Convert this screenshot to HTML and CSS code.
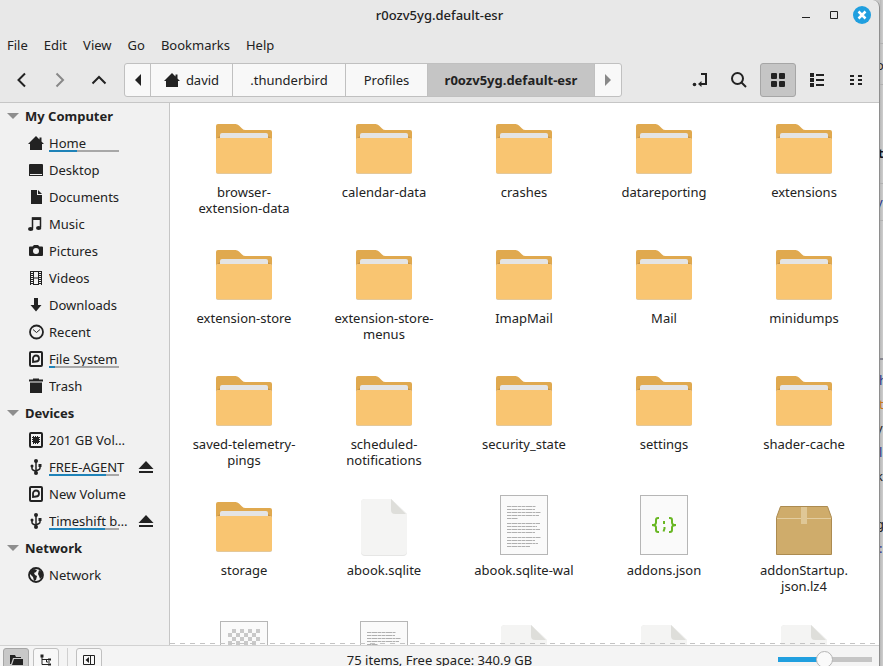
FILE: index.html
```
<!DOCTYPE html>
<html lang="en">
<head>
<meta charset="utf-8">
<title>r0ozv5yg.default-esr</title>
<link rel="stylesheet" href="styles.css">
</head>
<body>
<svg class="defs" aria-hidden="true">
  <defs>
    <symbol id="folder" viewBox="0 0 64 64">
      <path d="M4 10q0-2 2-2h17.500q2 0 3.500 1.500l3 3q1.500 1.500 3.500 1.500H58q2 0 2 2v8H4z" fill="#e0a94f"/>
      <path d="M4 23l4-3h48l4 3v3H4z" fill="#c4924a"/>
      <path d="M8 24v-5q0-2 2-2h44q2 0 2 2v5z" fill="#e4e4e4"/>
      <path d="M4 24q0-2 2-2h52q2 0 2 2v32q0 2-2 2H6q-2 0-2-2z" fill="#cfcac2"/>
      <path d="M4 24q0-2 2-2h52q2 0 2 2v31.500q0 2-2 2H6q-2 0-2-2z" fill="#f9c571"/>
    </symbol>
    <symbol id="blank" viewBox="0 0 64 64">
      <path d="M9 9q0-4 4-4h26l16 15v38q0 4-4 4H13q-4 0-4-4z" fill="#e6e6e5"/>
      <path d="M9 9q0-4 4-4h26l16 15v37q0 4-4 4H13q-4 0-4-4z" fill="#f4f4f3"/>
      <path d="M39 5l15 15H43q-4 0-4-4z" fill="#dededa"/>
    </symbol>
    <symbol id="sheet" viewBox="0 0 64 64">
      <rect x="8.500" y="1.500" width="47" height="59" fill="#fafafa" stroke="#b6b6b6"/>
    </symbol>
    <symbol id="text-file" viewBox="0 0 64 64">
      <use href="#sheet"/>
      <path d="M15 12.500h29M15 15.500h28M15 18.500h34M15 21.500h32M15 24.500h11M15 29.500h33M15 32.500h30M15 35.500h33M15 38.500h28M15 43.500h34M15 46.500h28M15 49.500h31M15 52.500h23" stroke="#b0b0b0" stroke-dasharray="4 .5 6 .5 3 .5"/>
    </symbol>
    <symbol id="image-file" viewBox="0 0 64 64">
      <use href="#sheet"/>
      <path d="M20 11h32M20 19h32M20 27h32" stroke="#c9c9c9" stroke-width="4" stroke-dasharray="4 4"/>
      <path d="M16 15h32M16 23h32M16 31h32" stroke="#c9c9c9" stroke-width="4" stroke-dasharray="4 4"/>
    </symbol>
    <symbol id="json-file" viewBox="0 0 64 64">
      <use href="#sheet"/>
      <g fill="none" stroke="#68b723" stroke-width="2">
        <path d="M27 24h-1q-2 0-2 2v2.500q0 2.500-4 2.500 4 0 4 2.500V36q0 2 2 2h1M37 24h1q2 0 2 2v2.500q0 2.500 4 2.500-4 0-4 2.500V36q0 2-2 2h-1"/>
        <path d="M32 27v3M32.500 33v1.500l-1 3"/>
      </g>
    </symbol>
    <symbol id="archive" viewBox="0 0 64 64">
      <path d="M8.500 12.500h47l4 11v37h-55v-37z" fill="#cfac6b" stroke="#ac8b50"/>
      <path d="M5 24.500h54" stroke="#e3cda0"/>
      <path d="M29 13h6v17h-6z" fill="#dfc796"/>
    </symbol>
    <symbol id="home" viewBox="0 0 16 16"><path d="M8 1L0 9h2v6h12V9h2l-2.500-2.500V2.500h-2v2z" fill="currentColor"/></symbol>
    <symbol id="disk" viewBox="0 0 16 16"><rect x="2" y="1" width="12" height="14" rx="1" fill="none" stroke="currentColor" stroke-width="2"/><path d="M5 11V7.500A3 3 0 1 1 8 10.500z" fill="none" stroke="currentColor" stroke-width="1.800"/></symbol>
    <symbol id="usb" viewBox="0 0 16 16"><path d="M8 2v12M4 6.500v3q0 1 1 1.500l3 1.500M12 6v3q0 1-1 1.500L8 12" fill="none" stroke="currentColor" stroke-width="1.500"/><circle cx="8" cy="2" r="2" fill="currentColor"/><circle cx="8" cy="14" r="2" fill="currentColor"/><circle cx="4" cy="7" r="1.500" fill="currentColor"/><path d="M10.500 5h3v3h-3z" fill="currentColor"/></symbol>
    <symbol id="eject" viewBox="0 0 16 16"><path d="M8 2l7.500 8h-15zM1 12h14v2H1z" fill="currentColor"/></symbol>
  </defs>
</svg>
<div class="desktop">
<div class="window">
  <header class="titlebar">
    <h1>r0ozv5yg.default-esr</h1>
    <div class="controls">
      <button aria-label="Minimize"><svg viewBox="0 0 16 16"><path d="M4 10.500h8" stroke="#222"/></svg></button>
      <button aria-label="Maximize"><svg viewBox="0 0 16 16"><path d="M4.500 4.500h7v7h-7z" fill="none" stroke="#222"/></svg></button>
      <button class="close" aria-label="Close"><svg viewBox="0 0 16 16"><path d="M4.500 4.500l7 7m0-7l-7 7" stroke="#fff" stroke-width="2.500"/></svg></button>
    </div>
  </header>
  <nav class="menubar">
    <button>File</button><button>Edit</button><button>View</button><button>Go</button><button>Bookmarks</button><button>Help</button>
  </nav>
  <div class="toolbar">
    <div class="tools">
      <button aria-label="Back"><svg viewBox="0 0 16 16"><path d="M12 1.500L5.500 8l6.500 6.500" fill="none" stroke="currentColor" stroke-width="2"/></svg></button>
      <button class="dim" aria-label="Forward"><svg viewBox="0 0 16 16"><path d="M4.500 1.500L11 8l-6.500 6.500" fill="none" stroke="currentColor" stroke-width="2"/></svg></button>
      <button aria-label="Up"><svg viewBox="0 0 16 16"><path d="M1.500 11.500L8 5l6.500 6.500" fill="none" stroke="currentColor" stroke-width="2"/></svg></button>
    </div>
    <nav class="path">
      <button class="step" aria-label="Scroll left"><svg viewBox="0 0 16 16"><path d="M11 2v12L5 8z" fill="currentColor"/></svg></button>
      <button class="short"><svg viewBox="0 0 16 16"><use href="#home"/></svg>david</button>
      <button class="medium">.thunderbird</button>
      <button class="short">Profiles</button>
      <button class="current">r0ozv5yg.default-esr</button>
      <button class="step dim" aria-label="Scroll right"><svg viewBox="0 0 16 16"><path d="M5 2v12l6-6z" fill="currentColor"/></svg></button>
    </nav>
    <div class="tools views">
      <button aria-label="Toggle location entry"><svg viewBox="0 0 16 16"><path d="M9 2h5v10H8" fill="none" stroke="currentColor" stroke-width="2"/><path d="M9.500 9v6L6 12z" fill="currentColor"/><circle cx="2.500" cy="12.500" r="1.800" fill="currentColor"/></svg></button>
      <button aria-label="Search"><svg viewBox="0 0 16 16"><circle cx="6.500" cy="6.500" r="5.500" fill="none" stroke="currentColor" stroke-width="2"/><path d="M10.500 10.500l4.500 4.500" stroke="currentColor" stroke-width="2"/></svg></button>
      <button class="active" aria-label="Icon view"><svg viewBox="0 0 16 16"><path d="M2 1h4q1 0 1 1v4q0 1-1 1H2Q1 7 1 6V2q0-1 1-1zM10 1h4q1 0 1 1v4q0 1-1 1h-4q-1 0-1-1V2q0-1 1-1zM2 9h4q1 0 1 1v4q0 1-1 1H2q-1 0-1-1v-4q0-1 1-1zM10 9h4q1 0 1 1v4q0 1-1 1h-4q-1 0-1-1v-4q0-1 1-1z" fill="currentColor"/></svg></button>
      <button aria-label="List view"><svg viewBox="0 0 16 16"><path d="M1 1h4v4H1zM1 6h4v4H1zM1 11h4v4H1zM7 2h8v2H7zM7 7h8v2H7zM7 12h8v2H7z" fill="currentColor"/></svg></button>
      <button aria-label="Compact view"><svg viewBox="0 0 16 16"><path d="M2 3h4v2H2zM2 7h4v2H2zM2 11h4v2H2zM10 3h4v2h-4zM10 7h4v2h-4zM10 11h4v2h-4z" fill="currentColor"/></svg></button>
    </div>
  </div>
  <div class="content">
    <aside class="sidebar">
      <h2>My Computer</h2>
      <ul>
        <li><svg viewBox="0 0 16 16"><use href="#home"/></svg><a href="#">Home</a><i class="usage"><b style="width:40%"></b></i></li>
        <li><svg viewBox="0 0 16 16"><path d="M1 3q0-1 1-1h12q1 0 1 1v11H1z" fill="currentColor"/><path d="M2 12.500h12" stroke="#f1f1f1"/></svg><a href="#">Desktop</a></li>
        <li><svg viewBox="0 0 16 16"><path d="M3 1h6v5h5v9H3zM10 1l4 4h-4z" fill="currentColor"/></svg><a href="#">Documents</a></li>
        <li><svg viewBox="0 0 16 16"><path d="M4.500 12V2h8v9" fill="none" stroke="currentColor" stroke-width="1.500"/><path d="M4 1.500h9v2.500H4z" fill="currentColor"/><ellipse cx="2.700" cy="13" rx="2.700" ry="2" fill="currentColor"/><ellipse cx="10.700" cy="12" rx="2.700" ry="2" fill="currentColor"/></svg><a href="#">Music</a></li>
        <li><svg viewBox="0 0 16 16"><path d="M2 3.500h2.500L6 2h4l1.500 1.500H14q1 0 1 1V12q0 1-1 1H2q-1 0-1-1V4.500q0-1 1-1z" fill="currentColor"/><circle cx="8" cy="8" r="3" fill="#f1f1f1"/></svg><a href="#">Pictures</a></li>
        <li><svg viewBox="0 0 16 16"><path d="M2.500 1v14M13.500 1v14" stroke="currentColor"/><path d="M4 1v14M12 1v14" stroke="currentColor" stroke-width="2" stroke-dasharray="1 1"/><path d="M5.500 1v14M10.500 1v14M5 1.500h6M5 8h6M5 14.500h6" stroke="currentColor"/></svg><a href="#">Videos</a></li>
        <li><svg viewBox="0 0 16 16"><path d="M6 1h4v7h3.500L8 14.500 2.500 8H6z" fill="currentColor"/></svg><a href="#">Downloads</a></li>
        <li><svg viewBox="0 0 16 16"><circle cx="8.500" cy="8" r="6.500" fill="none" stroke="currentColor" stroke-width="1.800"/><path d="M5 5.500l3.500 3 3.500-3" fill="none" stroke="currentColor"/></svg><a href="#">Recent</a></li>
        <li><svg viewBox="0 0 16 16"><use href="#disk"/></svg><a href="#">File System</a><i class="usage"><b style="width:9%"></b></i></li>
        <li><svg viewBox="0 0 16 16"><path d="M1 1.500h4V.5h6v1h4v2H1zM2 4.500h12V15H2z" fill="currentColor"/></svg><a href="#">Trash</a></li>
      </ul>
      <h2>Devices</h2>
      <ul>
        <li><svg viewBox="0 0 16 16"><rect x="2" y="1" width="12" height="14" rx="1" fill="none" stroke="currentColor" stroke-width="2"/><path d="M5 5h6v6H5z" fill="currentColor"/><path d="M5.500 4v8M7.500 4v8M9.500 4v8M4 5.500h8M4 7.500h8M4 9.500h8" stroke="currentColor"/></svg><a href="#">201 GB Volume</a></li>
        <li><svg viewBox="0 0 16 16"><use href="#usb"/></svg><a href="#">FREE-AGENT</a><i class="usage"><b style="width:81%"></b></i><button aria-label="Eject FREE-AGENT"><svg viewBox="0 0 16 16"><use href="#eject"/></svg></button></li>
        <li><svg viewBox="0 0 16 16"><use href="#disk"/></svg><a href="#">New Volume</a></li>
        <li><svg viewBox="0 0 16 16"><use href="#usb"/></svg><a href="#">Timeshift backup</a><i class="usage"><b style="width:80%"></b></i><button aria-label="Eject Timeshift"><svg viewBox="0 0 16 16"><use href="#eject"/></svg></button></li>
      </ul>
      <h2>Network</h2>
      <ul>
        <li><svg viewBox="0 0 16 16"><circle cx="8" cy="8" r="7" fill="none" stroke="currentColor" stroke-width="1.800"/><path d="M2 4l4-2 3 1-1 2-2 1 1 2 2 1-1 4-2 1-1-4-3-3zM11 3l3 2v5l-2 2-1-3-1-2z" fill="currentColor"/></svg><a href="#">Network</a></li>
      </ul>
    </aside>
    <main class="files">
      <figure><svg><use href="#folder"/></svg><figcaption>browser-<br>extension-data</figcaption></figure>
      <figure><svg><use href="#folder"/></svg><figcaption>calendar-data</figcaption></figure>
      <figure><svg><use href="#folder"/></svg><figcaption>crashes</figcaption></figure>
      <figure><svg><use href="#folder"/></svg><figcaption>datareporting</figcaption></figure>
      <figure><svg><use href="#folder"/></svg><figcaption>extensions</figcaption></figure>
      <figure><svg><use href="#folder"/></svg><figcaption>extension-store</figcaption></figure>
      <figure><svg><use href="#folder"/></svg><figcaption>extension-store-<br>menus</figcaption></figure>
      <figure><svg><use href="#folder"/></svg><figcaption>ImapMail</figcaption></figure>
      <figure><svg><use href="#folder"/></svg><figcaption>Mail</figcaption></figure>
      <figure><svg><use href="#folder"/></svg><figcaption>minidumps</figcaption></figure>
      <figure><svg><use href="#folder"/></svg><figcaption>saved-telemetry-<br>pings</figcaption></figure>
      <figure><svg><use href="#folder"/></svg><figcaption>scheduled-<br>notifications</figcaption></figure>
      <figure><svg><use href="#folder"/></svg><figcaption>security_state</figcaption></figure>
      <figure><svg><use href="#folder"/></svg><figcaption>settings</figcaption></figure>
      <figure><svg><use href="#folder"/></svg><figcaption>shader-cache</figcaption></figure>
      <figure><svg><use href="#folder"/></svg><figcaption>storage</figcaption></figure>
      <figure><svg><use href="#blank"/></svg><figcaption>abook.sqlite</figcaption></figure>
      <figure><svg><use href="#text-file"/></svg><figcaption>abook.sqlite-wal</figcaption></figure>
      <figure><svg><use href="#json-file"/></svg><figcaption>addons.json</figcaption></figure>
      <figure><svg><use href="#archive"/></svg><figcaption>addonStartup.<br>json.lz4</figcaption></figure>
      <figure><svg><use href="#image-file"/></svg></figure>
      <figure><svg><use href="#text-file"/></svg></figure>
      <figure><svg><use href="#blank"/></svg></figure>
      <figure><svg><use href="#blank"/></svg></figure>
      <figure><svg><use href="#blank"/></svg></figure>
    </main>
  </div>
  <footer class="statusbar">
    <div class="panes">
      <button class="active" aria-label="Places"><svg viewBox="0 0 16 16"><path d="M2 3h5l1 2h5v1H5l-2 6H2zM6 7h9v6H4z" fill="currentColor"/></svg></button>
      <button aria-label="Treeview"><svg viewBox="0 0 16 16"><path d="M4 4v8.500h8M4 7.500h8M8.500 7v3H12" fill="none" stroke="currentColor"/><path d="M2.500 2.500h3v3h-3zM10 6.500h3v2h-3zM10 11.500h3v2h-3z" fill="currentColor"/></svg></button>
      <hr>
      <button aria-label="Hide sidebar"><svg viewBox="0 0 16 16"><path d="M2.500 3.500h11v9h-11zM9.500 3v10" fill="none" stroke="currentColor"/><path d="M8 5v6L4.500 8z" fill="currentColor"/></svg></button>
    </div>
    <p>75 items, Free space: 340.9 GB</p>
    <input type="range" min="0" max="100" value="49" aria-label="Zoom">
  </footer>
</div>
<div class="behind" aria-hidden="true">
  <span class="line l1"></span><span class="l2">o</span><span class="line l3"></span>
  <span class="bold l4">t</span><span class="line l5"></span><span class="blue l6">y</span><span class="line l7"></span>
  <span class="line dark l8"></span><span class="h blue l9">h</span><span class="h orange l10">t</span><span class="l11">y</span><span class="h blue l12">l</span><span class="l13">k</span><span class="l14">g</span><span class="h blue l15">:</span>
</div>
</div>
</body>
</html>
```
FILE: styles.css
```
* { box-sizing: border-box; }
body {
  margin: 0;
  overflow: hidden;
  background: #c9c9c9;
  color: #222;
  font: 13px/16px "Noto Sans", sans-serif;
}
button {
  display: flex;
  align-items: center;
  justify-content: center;
  padding: 0;
  border: 0;
  background: none;
  color: inherit;
  font: inherit;
}
svg { flex: none; width: 16px; height: 16px; }
.defs { position: absolute; width: 0; height: 0; }
.dim { color: #888; }

.desktop { display: flex; height: calc(100vh + 7px); }
.window {
  display: flex;
  flex: 1;
  flex-direction: column;
  min-width: 0;
  border-right: 1px solid #8e8e8e;
  border-top-right-radius: 7px;
  background: #e8e8e8;
}

.titlebar {
  display: grid;
  grid-template-columns: 1fr auto 1fr;
  align-items: center;
  height: 30px;
}
.titlebar h1 { grid-column: 2; margin: 0; font-size: 13px; font-weight: 500; }
.controls { display: flex; justify-content: flex-end; gap: 10px; padding-right: 8px; }
.controls button { width: 18px; height: 18px; border-radius: 50%; }
.controls .close { background: #209fdf; }

.menubar { display: flex; gap: 16px; align-items: center; height: 30px; padding-left: 7px; }

.toolbar {
  display: flex;
  align-items: center;
  height: 43px;
  padding: 0 5px 2px 3px;
  border-bottom: 1px solid #c6c6c6;
}
.tools { display: flex; gap: 3px; }
.tools button { width: 36px; height: 34px; border: 1px solid transparent; border-radius: 3px; }
.tools .active { border-color: #a6a6a6; background: #c5c5c5; }
.views { margin-left: auto; }
.path { display: flex; margin-left: 7px; border: 1px solid #c0c0c0; border-radius: 3px; background: #f8f8f8; }
.path button { gap: 6px; height: 32px; border-right: 1px solid #c0c0c0; }
.path button:last-child { border-right: 0; }
.path .step { width: 26px; }
.path .short { min-width: 82px; }
.path .medium { min-width: 113px; }
.path .current { min-width: 167px; background: #c5c5c5; font-weight: 700; }

.content { display: flex; flex: 1; min-height: 0; }
.sidebar { flex: none; width: 170px; border-right: 1px solid #c6c6c6; background: #f1f1f1; }
.sidebar h2 {
  display: flex;
  gap: 6px;
  align-items: center;
  height: 27px;
  margin: 0;
  padding: 0 0 2px 7px;
  font-size: 13px;
}
.sidebar h2::before {
  border: 6px solid transparent;
  border-top-color: #8e8e8e;
  border-bottom: 0;
  content: "";
}
.sidebar ul { margin: 0; padding: 0; list-style: none; }
.sidebar li {
  position: relative;
  display: flex;
  gap: 5px;
  align-items: center;
  height: 27px;
  padding: 0 15px 2px 28px;
}
.sidebar a { width: 84px; overflow: hidden; color: inherit; line-height: 18px; text-decoration: none; text-overflow: ellipsis; white-space: nowrap; }
.sidebar button { margin-left: auto; }
.usage { position: absolute; bottom: 5px; left: 49px; width: 70px; height: 2px; background: #a8a8a8; }
.usage b { display: block; height: 2px; background: #1f83b8; }

.files {
  position: relative;
  display: grid;
  flex: 1;
  grid-template-columns: repeat(auto-fill, 140px);
  grid-auto-rows: 126px;
  align-content: start;
  padding: 13px 4px 0;
  overflow: hidden;
  background: #fff;
}
.files::after {
  position: absolute;
  right: 0;
  bottom: 1px;
  left: 0;
  height: 1px;
  background: repeating-linear-gradient(90deg, #c4c4c4 0 5px, transparent 5px 10px);
  content: "";
}
.files figure { display: flex; flex-direction: column; gap: 4px; align-items: center; margin: 0; text-align: center; }
.files svg { width: 64px; height: 64px; }

.statusbar {
  display: grid;
  flex: none;
  grid-template-columns: 1fr auto 1fr;
  align-items: center;
  height: 28px;
  border-top: 1px solid #d2d2d2;
  background: #f4f4f4;
}
.statusbar p { margin: 0; }
.panes { display: flex; gap: 4px; align-items: center; padding-left: 3px; }
.panes button { width: 26px; height: 24px; border: 1px solid #c0c0c0; border-radius: 3px; background: #f8f8f8; }
.panes .active { border-color: #a6a6a6; background: #c8c8c8; }
.panes hr { width: 1px; height: 24px; margin: 0 4px; border: 0; background: #d0d0d0; }
.statusbar input {
  justify-self: end;
  width: 94px;
  height: 18px;
  margin: 0 7px;
  appearance: none;
  border-radius: 3px;
  background: linear-gradient(90deg, #209fdf 50%, #c5c5c5 50%) center / 100% 5px no-repeat;
}
.statusbar input::-webkit-slider-thumb {
  width: 17px;
  height: 17px;
  border: 1px solid #b5b5b5;
  border-radius: 50%;
  appearance: none;
  background: #fafafa;
}

/* Sliver of the window that lies behind this one */
.behind {
  position: relative;
  flex: none;
  width: 3px;
  overflow: hidden;
  background: linear-gradient(90deg, #b8b8b8, #cecece);
}
.behind span { position: absolute; left: -4px; }
.behind .h { left: -1px; }
.behind .line { left: 0; width: 100%; height: 1px; background: #b0b0b0; }
.behind .dark { height: 2px; background: #85858f; }
.behind .bold { left: -2px; color: #111; font-weight: 700; }
.behind .blue { color: #24348a; }
.behind .orange { color: #c8781c; }
.l1 { top: 43px; } .l2 { top: 57px; } .l3 { top: 84px; }
.l4 { top: 145px; } .l5 { top: 183px; } .l6 { top: 194px; } .l7 { top: 220px; }
.l8 { top: 358px; } .l9 { top: 372px; } .l10 { top: 396px; } .l11 { top: 420px; }
.l12 { top: 444px; } .l13 { top: 468px; } .l14 { top: 516px; } .l15 { top: 540px; }
```
